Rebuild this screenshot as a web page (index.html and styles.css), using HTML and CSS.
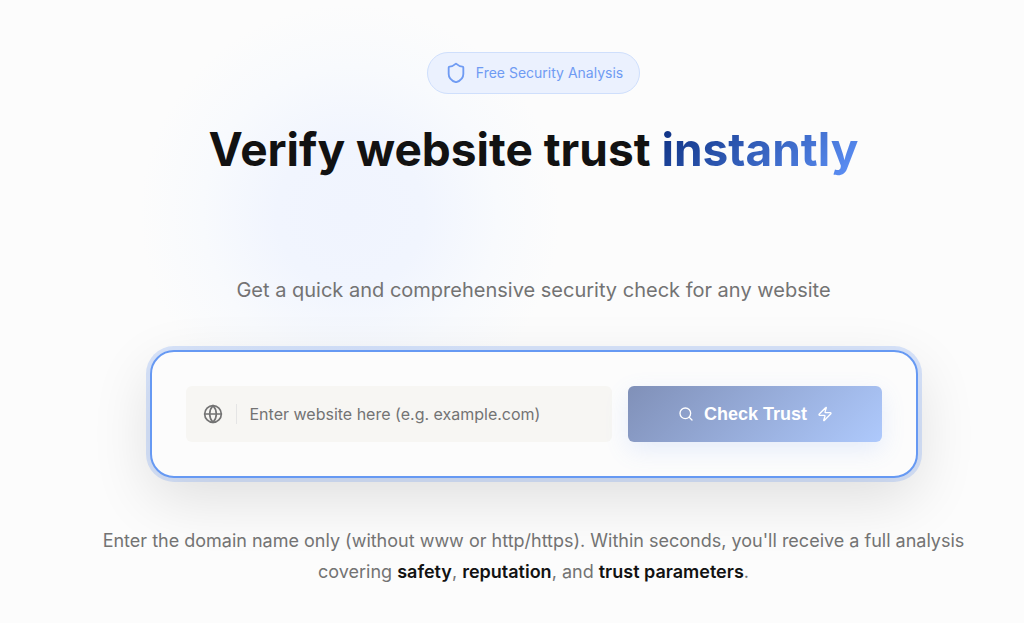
FILE: index.html
```html
<!DOCTYPE html>
<html lang="en">
<head>
<meta charset="utf-8">
<meta name="viewport" content="width=device-width, initial-scale=1">
<title>Verify website trust</title>
<link rel="stylesheet" href="styles.css">
</head>
<body>
<main class="hero">
  <div class="glow" aria-hidden="true"></div>
  <div class="badge">
    <svg class="badge-icon" viewBox="0 0 24 24" aria-hidden="true"><path d="M20 13c0 5-3.500 7.500-7.660 8.950a1 1 0 0 1-.67-.01C7.500 20.500 4 18 4 13V6a1 1 0 0 1 1-1c2 0 4.500-1.200 6.240-2.720a1.170 1.170 0 0 1 1.520 0C14.510 3.810 17 5 19 5a1 1 0 0 1 1 1z"/></svg>
    <span>Free Security Analysis</span>
  </div>
  <h1 class="title">Verify website trust <span class="accent">instantly</span></h1>
  <p class="subtitle">Get a quick and comprehensive security check for any website</p>
  <form class="search">
    <div class="field">
      <label class="field-label" for="site" aria-label="Website">
        <svg class="field-icon" viewBox="0 0 24 24" aria-hidden="true"><circle cx="12" cy="12" r="10"/><path d="M12 2a14.500 14.500 0 0 0 0 20 14.500 14.500 0 0 0 0-20"/><path d="M2 12h20"/></svg>
      </label>
      <input class="field-input" id="site" type="text" placeholder="Enter website here (e.g. example.com)">
    </div>
    <button class="submit" type="button">
      <svg class="submit-icon" viewBox="0 0 24 24" aria-hidden="true"><circle cx="11" cy="11" r="8"/><path d="m21 21-4.300-4.300"/></svg>
      <span>Check Trust</span>
      <svg class="submit-icon" viewBox="0 0 24 24" aria-hidden="true"><path d="M4 14a1 1 0 0 1-.78-1.630l9.900-10.200a.5.5 0 0 1 .86.46l-1.920 6.020A1 1 0 0 0 13 10h7a1 1 0 0 1 .78 1.630l-9.900 10.200a.5.5 0 0 1-.86-.46l1.920-6.020A1 1 0 0 0 11 14z"/></svg>
    </button>
  </form>
  <p class="hint">Enter the domain name only (without www or http/https). Within seconds, you'll receive a full analysis covering <strong>safety</strong>, <strong>reputation</strong>, and <strong>trust parameters</strong>.</p>
</main>
</body>
</html>
```
FILE: styles.css
```css
* { box-sizing: border-box; }

body {
  margin: 0;
  background: #fcfcfc;
  color: #737373;
  font-family: Inter, "Liberation Sans", sans-serif;
}

svg {
  fill: none;
  stroke: currentColor;
  stroke-width: 2;
  stroke-linecap: round;
  stroke-linejoin: round;
  flex: none;
}

.hero {
  position: relative;
  display: flex;
  flex-direction: column;
  align-items: center;
  padding: 52px 40px 32px 83px;
  overflow: hidden;
}

.glow {
  position: absolute;
  z-index: -1;
  top: 4px;
  left: 140px;
  width: 420px;
  height: 420px;
  border-radius: 50%;
  background: radial-gradient(closest-side, #f0f4fe 0%, #f1f5fe 35%, #f8fafd 70%, #fcfcfc 100%);
}

.badge {
  display: flex;
  align-items: center;
  gap: 9px;
  height: 42px;
  padding: 0 16px 0 17px;
  border: 1px solid #cfdffc;
  border-radius: 21px;
  background: #ebf1fe;
  color: #6f9bf3;
  font-size: 14px;
  line-height: 20px;
}

.badge-icon { width: 22px; height: 22px; }

.title {
  margin: 25px 0 0;
  color: #121212;
  font-size: 46px;
  line-height: 60px;
  font-weight: 700;
  text-align: center;
}

.accent {
  background: linear-gradient(135deg, #0c2f80, #5f93fa);
  background-clip: text;
  -webkit-background-clip: text;
  color: transparent;
}

.subtitle {
  margin: 95px 0 0;
  font-size: 20px;
  line-height: 32px;
  text-align: center;
}

.search {
  display: flex;
  gap: 16px;
  width: 100%;
  max-width: 768px;
  margin: 44px 0 0;
  padding: 34px;
  border: 2px solid #6699f3;
  border-radius: 24px;
  background: #fcfcfc;
  box-shadow: 0 0 0 4px rgba(102, 153, 243, 0.25), 0 20px 60px rgba(0, 0, 0, 0.12);
}

.field {
  display: flex;
  flex: 1;
  align-items: center;
  min-width: 0;
  height: 56px;
  padding-left: 17px;
  border-radius: 6px;
  background: #f7f6f3;
}

.field-label {
  display: flex;
  padding-right: 13px;
  border-right: 1px solid #e5e5e5;
}

.field-icon { width: 20px; height: 20px; }

.field-input {
  flex: 1;
  min-width: 0;
  height: 100%;
  padding: 0 13px;
  border: 0;
  outline: 0;
  background: transparent;
  color: #121212;
  font: inherit;
  font-size: 16px;
}

.field-input::placeholder { color: #737373; opacity: 1; }

.submit {
  display: flex;
  flex: 0 0 254px;
  align-items: center;
  justify-content: center;
  gap: 10px;
  height: 56px;
  padding: 0 0 0 2px;
  border: 0;
  border-radius: 6px;
  background: linear-gradient(135deg, #8090b8, #aec9fc);
  box-shadow: 0 8px 24px rgba(91, 141, 239, 0.14);
  color: #fff;
  font: 700 18px/28px "Liberation Sans", Arial, sans-serif;
}

.submit-icon { width: 16px; height: 16px; }

.hint {
  max-width: 880px;
  margin: 47px 0 0;
  font-size: 18px;
  line-height: 31px;
  text-align: center;
}

.hint strong { color: #121212; font-weight: 600; }
```
